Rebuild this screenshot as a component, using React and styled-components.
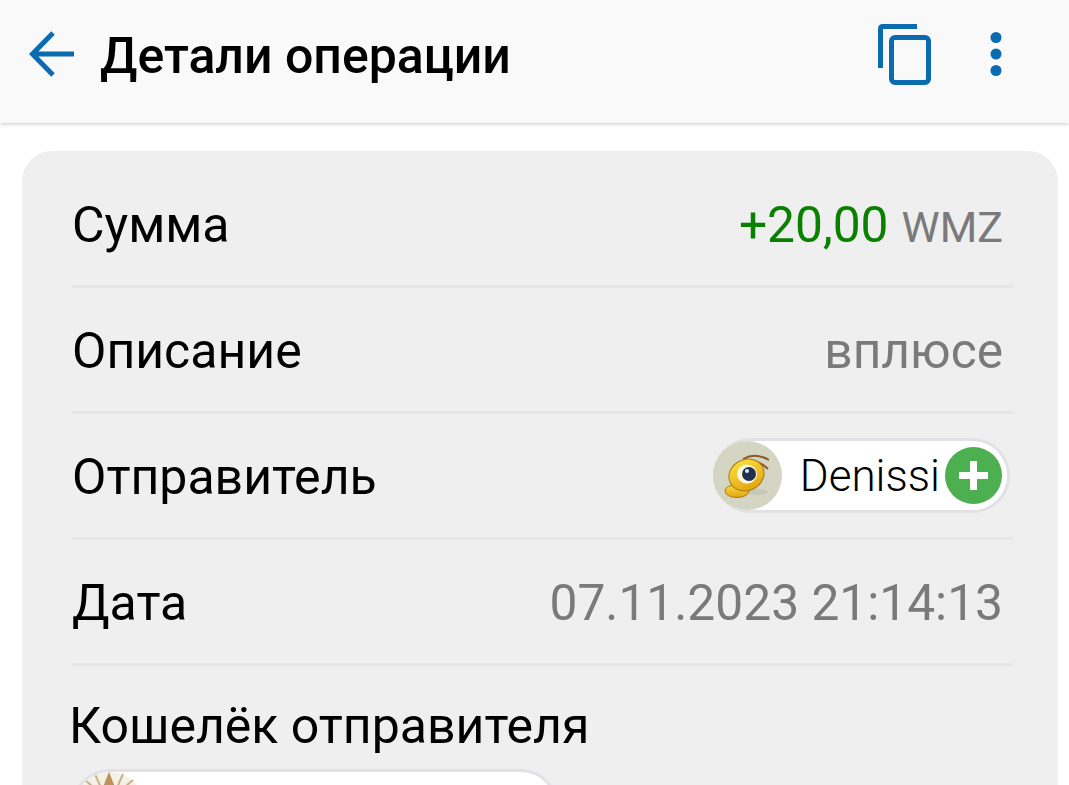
import React from "react";
import styled, { createGlobalStyle } from "styled-components";

const GlobalStyle = createGlobalStyle`
  html, body {
    margin: 0;
    padding: 0;
    height: 100%;
    overflow: hidden;
    background: #fff;
    font-family: Roboto, "Liberation Sans", sans-serif;
  }
`;

const Page = styled.div`
  width: 1069px;
  height: 785px;
  overflow: hidden;
`;

const Header = styled.header`
  display: flex;
  align-items: center;
  box-sizing: border-box;
  height: 123px;
  padding: 0 0 15px 29px;
  background: #f9f9fa;
  box-shadow: 0 1px 4px rgba(0, 0, 0, 0.22);
`;

const Title = styled.h1`
  flex: 1;
  margin: 4px 0 0 25px;
  font-size: 50px;
  font-weight: 500;
  color: #000;
`;

const IconSlot = styled.svg`
  display: block;
  flex: none;
`;

const CopySlot = styled(IconSlot)`
  margin-right: 59px;
`;

const MenuSlot = styled(IconSlot)`
  margin-right: 67px;
`;

const Card = styled.section`
  margin: 28px 11px 0 22px;
  padding: 11px 45px 0 50px;
  height: 700px;
  background: #efefef;
  border-radius: 30px;
`;

const Row = styled.div`
  display: flex;
  align-items: center;
  justify-content: space-between;
  box-sizing: border-box;
  height: 126px;
  padding-right: 10px;
  border-bottom: 3px solid #e6e6e6;
`;

const Label = styled.span`
  display: block;
  padding-top: 2px;
  font-size: 50px;
  color: #000;
`;

const Value = styled.span`
  display: block;
  padding-top: 2px;
  font-size: 49.7px;
  color: #7a7a7a;
`;

const Amount = styled(Value)`
  color: #0a8000;
`;

const Currency = styled.span`
  font-size: 43px;
  color: #7a7a7a;
  margin-left: 13px;
`;

const Pill = styled.div`
  display: flex;
  align-items: center;
  box-sizing: border-box;
  height: 75px;
  margin-right: -7px;
  background: #fff;
  border: 3px solid #e2e2e6;
  border-radius: 38px;
`;

const AntSlot = styled(IconSlot)`
  margin-left: -3px;
`;

const PillName = styled.span`
  margin: 0 5px 0 18px;
  font-size: 44px;
  font-weight: 300;
  color: #000;
`;

const PlusSlot = styled(IconSlot)`
  margin-right: 5px;
`;

const WalletBlock = styled.div`
  padding-top: 31px;
`;

const WalletLabel = styled(Label)`
  margin-left: -3px;
  padding-top: 0;
  line-height: 58px;
`;

const WalletPill = styled.div`
  box-sizing: border-box;
  width: 486px;
  height: 75px;
  margin-top: 14px;
  background: #fff;
  border: 3px solid #e2e2e6;
  border-radius: 38px;
  overflow: hidden;
`;

const BackIcon = () => (
  <IconSlot width="46" height="46" viewBox="0 0 46 46" fill="none" stroke="#0b6bb0" strokeWidth="5">
    <path d="M45 23 H4 M24 2 L3.500 23 L24 44" />
  </IconSlot>
);

const CopyIcon = () => (
  <CopySlot width="53" height="61" viewBox="0 0 53 61" fill="none" stroke="#0b6bb0" strokeWidth="5">
    <path d="M39 2.500 H5 Q2.500 2.500 2.500 5 V44" />
    <rect x="13.500" y="13.500" width="37" height="45" rx="3.500" />
  </CopySlot>
);

const MenuIcon = () => (
  <MenuSlot width="12" height="44" viewBox="0 0 12 44" fill="#0b6bb0">
    <circle cx="6" cy="5.500" r="5.500" />
    <circle cx="6" cy="22" r="5.500" />
    <circle cx="6" cy="38.500" r="5.500" />
  </MenuSlot>
);

const AntAvatar = () => (
  <AntSlot width="69" height="69" viewBox="0 0 69 69">
    <defs>
      <linearGradient id="antYellow" x1="0" y1="0" x2="0" y2="1">
        <stop offset="0" stopColor="#f9dc3c" />
        <stop offset="1" stopColor="#e2a512" />
      </linearGradient>
    </defs>
    <circle cx="34.500" cy="34.500" r="34.500" fill="#d5d5c4" />
    <ellipse cx="44" cy="51" rx="11" ry="3" fill="#c8c8b8" />
    <path d="M30 18 Q42 11 56 19 M31 21 Q44 17 55 28" fill="none" stroke="#8a5a2a" strokeWidth="2" />
    <ellipse cx="24" cy="50" rx="12" ry="6.500" fill="url(#antYellow)" stroke="#a87c10" strokeWidth="1" />
    <ellipse cx="33.500" cy="34" rx="18" ry="15.500" fill="url(#antYellow)" stroke="#a87c10" strokeWidth="1" transform="rotate(-25 33.500 34)" />
    <ellipse cx="34" cy="33" rx="10" ry="9.500" fill="#fff8e0" />
    <circle cx="36" cy="33" r="7" fill="#22304f" />
    <circle cx="34" cy="30" r="2" fill="#dfe6f2" />
  </AntSlot>
);

const PlusBadge = () => (
  <PlusSlot width="57" height="57" viewBox="0 0 57 57">
    <circle cx="28.500" cy="28.500" r="28.500" fill="#4caf50" />
    <path d="M28.500 14 V43 M14 28.500 H43" stroke="#fff" strokeWidth="7" />
  </PlusSlot>
);

const SealAvatar = () => (
  <IconSlot width="69" height="69" viewBox="0 0 69 69">
    <circle cx="34.500" cy="34.500" r="34.500" fill="#f4f0e6" />
    <path d="M34 0 L42 20 L26 20 Z" fill="#b8935a" />
    <path d="M20 2 L27 18 M48 2 L41 18 M10 8 L24 20 M58 8 L44 20" stroke="#c8b48a" strokeWidth="2" />
  </IconSlot>
);

export default function App() {
  return (
    <Page>
      <GlobalStyle />
      <Header>
        <BackIcon />
        <Title>Детали операции</Title>
        <CopyIcon />
        <MenuIcon />
      </Header>
      <Card>
        <Row>
          <Label>Сумма</Label>
          <Amount>
            +20,00
            <Currency>WMZ</Currency>
          </Amount>
        </Row>
        <Row>
          <Label>Описание</Label>
          <Value>вплюсе</Value>
        </Row>
        <Row>
          <Label>Отправитель</Label>
          <Pill>
            <AntAvatar />
            <PillName>Denissi</PillName>
            <PlusBadge />
          </Pill>
        </Row>
        <Row>
          <Label>Дата</Label>
          <Value>07.11.2023 21:14:13</Value>
        </Row>
        <WalletBlock>
          <WalletLabel>Кошелёк отправителя</WalletLabel>
          <WalletPill>
            <SealAvatar />
          </WalletPill>
        </WalletBlock>
      </Card>
    </Page>
  );
}
